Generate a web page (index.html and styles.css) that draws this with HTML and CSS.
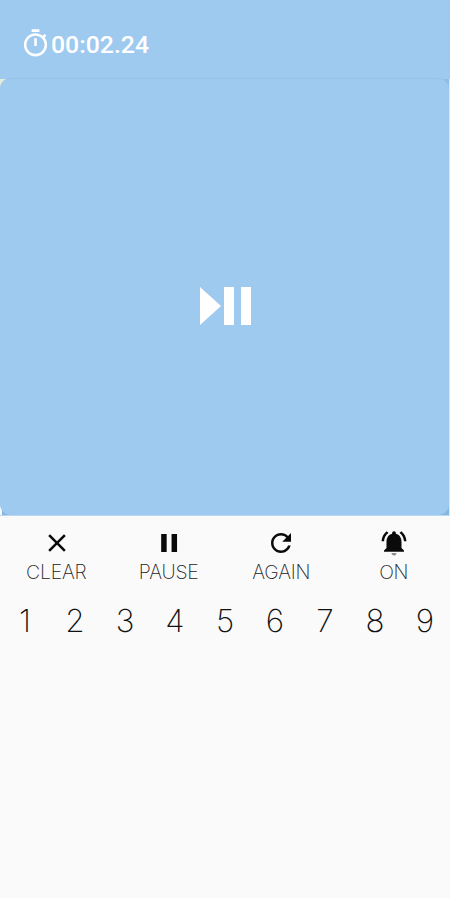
FILE: index.html
```html
<!DOCTYPE html>
<html lang="en">
<head>
    <meta charset="UTF-8">
    <meta name="viewport" content="width=device-width, initial-scale=1.0">
    <title>Timer</title>
    <link rel="stylesheet" href="styles.css">
</head>
<body>

    <div class="page">
        <header class="top-bar">
            <svg class="timer-icon" viewBox="0 0 24 24">
                <path d="M15 1H9v2h6V1zm-4 13h2V8h-2v6zm8.03-6.61l1.42-1.42c-.43-.51-.9-.99-1.41-1.41l-1.42 1.42C16.07 4.74 14.12 4 12 4c-4.97 0-9 4.03-9 9s4.02 9 9 9 9-4.03 9-9c0-2.12-.74-4.07-1.97-5.61zM12 20c-3.87 0-7-3.13-7-7s3.13-7 7-7 7 3.13 7 7-3.13 7-7 7z"/>
            </svg>
            <span class="time">00:02.24</span>
        </header>

        <div class="panel-wrap">
            <button class="panel" aria-label="Play or pause">
                <svg class="play-pause" viewBox="0 0 52 40">
                    <path d="M0 1v38l21-19zM24 1h10v38H24zM41 1h10v38H41z"/>
                </svg>
            </button>
        </div>

        <div class="actions">
            <button class="action">
                <svg class="icon close" viewBox="0 0 24 24">
                    <path d="M19 6.41L17.59 5 12 10.59 6.41 5 5 6.41 10.59 12 5 17.59 6.41 19 12 13.41 17.59 19 19 17.59 13.41 12z"/>
                </svg>
                <span class="label">CLEAR</span>
            </button>
            <button class="action">
                <svg class="icon" viewBox="0 0 24 24">
                    <path d="M5.3 4.2h4.7v15.6H5.3zM14.2 4.2h4.7v15.6h-4.7z"/>
                </svg>
                <span class="label">PAUSE</span>
            </button>
            <button class="action">
                <svg class="icon again" viewBox="0 0 24 24">
                    <path d="M17.65 6.35C16.2 4.9 14.21 4 12 4c-4.42 0-7.99 3.58-7.99 8s3.57 8 7.99 8c3.73 0 6.84-2.55 7.73-6h-2.08c-.82 2.33-3.04 4-5.65 4-3.31 0-6-2.69-6-6s2.69-6 6-6c1.66 0 3.14.69 4.22 1.78L13 11h7V4l-2.35 2.35z"/>
                </svg>
                <span class="label">AGAIN</span>
            </button>
            <button class="action">
                <svg class="icon bell" viewBox="0 0 24 24">
                    <path d="M7.58 4.08L6.15 2.65C3.75 4.48 2.17 7.3 2.03 10.5h2c.15-2.65 1.51-4.97 3.55-6.42zm12.39 6.42h2c-.15-3.2-1.73-6.02-4.12-7.85l-1.42 1.43c2.02 1.45 3.39 3.77 3.54 6.42zM18 11c0-3.07-1.64-5.64-4.5-6.32V4c0-.83-.67-1.5-1.5-1.5s-1.5.67-1.5 1.5v.68C7.63 5.36 6 7.92 6 11v5l-2 2v1h16v-1l-2-2v-5z"/>
                    <path class="clapper" d="M12 22c.14 0 .27-.01.4-.04.65-.14 1.18-.58 1.44-1.18.1-.24.15-.5.15-.78h-4c.01 1.1.9 2 2.01 2z"/>
                </svg>
                <span class="label">ON</span>
            </button>
        </div>

        <div class="numbers">
            <span>1</span>
            <span>2</span>
            <span>3</span>
            <span>4</span>
            <span>5</span>
            <span>6</span>
            <span>7</span>
            <span>8</span>
            <span>9</span>
        </div>
    </div>

</body>
</html>
```
FILE: styles.css
```css
body {
    margin: 0;
    background-color: #fafafa;
    font-family: "Roboto", sans-serif;
}

button {
    border: none;
    padding: 0;
    background: none;
    font: inherit;
    color: inherit;
    cursor: pointer;
}

.page {
    height: 898px;
    border-bottom: 2px solid #fff;
    overflow: hidden;
}

.top-bar {
    box-sizing: border-box;
    height: 79px;
    padding: 11px 0 0 20px;
    display: flex;
    align-items: center;
    background-color: #9fcaef;
    color: white;
}

.timer-icon {
    width: 31px;
    height: 31px;
    margin-top: -3px;
    fill: white;
}

.time {
    font-size: 24.8px;
    font-weight: 500;
    line-height: 28px;
}

/* corners behind the rounded panel */
.panel-wrap {
    box-sizing: border-box;
    height: 437px;
    background:
        linear-gradient(to right, #e4ecdf 0 50%, #8dbde6 50%) top / 100% 20px no-repeat,
        linear-gradient(to right, #f4f8fb 0 2px, #84b7e2 2px);
    border-right: 1px solid #dcebf7;
    border-bottom: 1px solid #b9d9f3;
}

.panel {
    display: flex;
    align-items: center;
    justify-content: center;
    width: 100%;
    height: 100%;
    border-radius: 11px;
    background-color: #9fcaef;
    box-shadow: 0 -1px 1px #96c2e8;
}

.play-pause {
    width: 52px;
    height: 40px;
    margin: 18px 0 0 3px;
    fill: white;
}

.actions {
    display: grid;
    grid-template-columns: repeat(4, 1fr);
    padding-top: 14px;
    color: #222;
}

.action {
    display: flex;
    flex-direction: column;
    align-items: center;
}

.icon {
    width: 28px;
    height: 28px;
    margin: -1px 0;
    fill: #0a0a0a;
}

.close {
    width: 30px;
    height: 30px;
    margin: -2px 0 -2px 2px;
}

.again,
.bell {
    width: 30px;
    height: 30px;
    margin: -2px 0;
}

.clapper {
    fill: #8c8c8c;
}

.label {
    margin-top: 4px;
    font-family: "Inter", sans-serif;
    font-size: 19.5px;
    font-weight: 200;
    line-height: 24px;
    letter-spacing: -0.2px;
}

.numbers {
    display: grid;
    grid-template-columns: repeat(9, 1fr);
    margin-top: 17px;
    font-family: "Inter", sans-serif;
    font-size: 31.5px;
    font-weight: 200;
    line-height: 40px;
    text-align: center;
    color: #111;
}
```
